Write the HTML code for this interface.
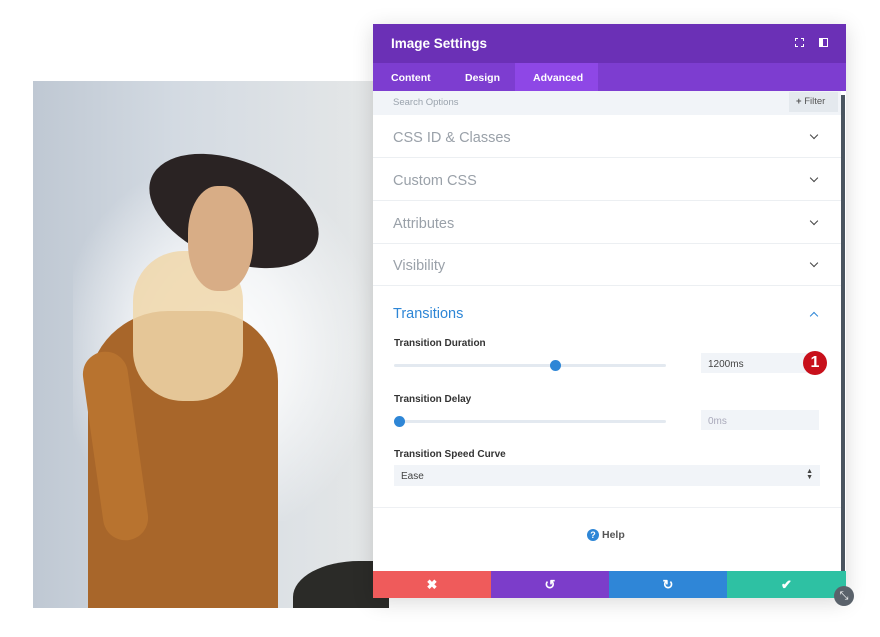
<!DOCTYPE html>
<html><head><style>
*{margin:0;padding:0;box-sizing:border-box}
body{width:880px;height:637px;background:#fff;position:relative;overflow:hidden;font-family:"Liberation Sans",sans-serif}
.abs{position:absolute}
.photo{left:33px;top:81px;width:356px;height:527px;background:linear-gradient(90deg,#bfc8d3 0%,#d3dae2 40%,#e6e8e8 100%);overflow:hidden}
.panel{left:373px;top:24px;width:473px;height:574px;background:#fff;box-shadow:0 4px 20px rgba(0,0,0,.15)}
.hdr{left:0;top:0;width:473px;height:39px;background:#6b30b6;color:#fff;font-size:13.5px;font-weight:bold;padding:12px 0 0 18px}
.tabs{left:0;top:39px;width:473px;height:28px;background:#7d3dd0;color:#fff;font-size:10.5px;font-weight:bold}
.tabs span{position:absolute;top:9px}
.search{left:0;top:67px;width:468px;height:24px;background:#f1f4f8;color:#9aa3ad;font-size:9.5px}
.row{left:0;width:468px;height:43px;border-bottom:1px solid #eceff2;color:#9aa1a9;font-size:14.5px;padding:15px 0 0 20px}
.chev{position:absolute;right:24px;top:17px;width:6px;height:6px;border-right:1.6px solid #444;border-bottom:1.6px solid #444;transform:rotate(45deg)}
.lbl{font-size:10px;color:#333;font-weight:bold}
.track{height:3px;background:#e3e9f0;border-radius:2px}
.dot{width:11px;height:11px;border-radius:50%;background:#2e86d6}
.inp{background:#f1f4f8;font-size:10px;color:#444;padding:6px 0 0 7px}
.btn{top:547px;height:27px;color:#fff;font-size:13px;font-weight:bold;text-align:center;line-height:27px}
</style></head><body>
<div class="abs photo">
  <div class="abs" style="left:40px;top:60px;width:320px;height:380px;background:radial-gradient(ellipse at 45% 55%,#fff 0%,rgba(255,255,255,.7) 30%,rgba(255,255,255,0) 65%)"></div>
  <div class="abs" style="left:55px;top:230px;width:190px;height:320px;background:#a8662a;border-radius:80px 70px 0 0"></div>
  <div class="abs" style="left:60px;top:270px;width:45px;height:190px;background:#b8732f;border-radius:30px;transform:rotate(-8deg)"></div>
  <div class="abs" style="left:100px;top:170px;width:110px;height:150px;background:rgba(240,215,170,.85);border-radius:50px"></div>
  <div class="abs" style="left:112px;top:80px;width:178px;height:100px;background:#2a2323;border-radius:50%;transform:rotate(22deg)"></div>
  <div class="abs" style="left:155px;top:105px;width:65px;height:105px;background:#d8ad86;border-radius:45%"></div>
  <div class="abs" style="left:260px;top:480px;width:110px;height:60px;background:#2b2b28;border-radius:60% 0 0 0"></div>
</div>
<div class="abs panel">
  <div class="abs hdr">Image Settings
    <div class="abs" style="right:42px;top:14px;width:9px;height:9px;border:1.5px dashed #fff"></div>
    <div class="abs" style="right:18px;top:14px;width:9px;height:9px;border:1.5px solid #fff;border-left-width:4px"></div>
  </div>
  <div class="abs tabs">
    <span style="left:18px">Content</span><span style="left:92px">Design</span>
    <div class="abs" style="left:142px;top:0;width:83px;height:28px;background:#8e47e6"></div>
    <span style="left:160px">Advanced</span>
  </div>
  <div class="abs search"><span class="abs" style="left:20px;top:6px">Search Options</span>
    <div class="abs" style="left:416px;top:1px;width:49px;height:20px;background:#e4e9ee;color:#555;font-size:9.5px;padding:4px 0 0 7px"><b>+</b> Filter</div></div>
  <div class="abs" style="left:468px;top:71px;width:4px;height:476px;background:#4a5560"></div>
  <div class="abs row" style="top:91px">CSS ID &amp; Classes<div class="chev"></div></div>
  <div class="abs row" style="top:134px">Custom CSS<div class="chev"></div></div>
  <div class="abs row" style="top:177px">Attributes<div class="chev"></div></div>
  <div class="abs row" style="top:219px">Visibility<div class="chev"></div></div>
  <div class="abs" style="left:20px;top:282px;color:#2e86d6;font-size:14.5px">Transitions</div>
  <div class="abs" style="right:29px;top:289px;width:6px;height:6px;border-left:1.6px solid #2e86d6;border-top:1.6px solid #2e86d6;transform:rotate(45deg)"></div>
  <div class="abs lbl" style="left:21px;top:314px">Transition Duration</div>
  <div class="abs track" style="left:21px;top:340px;width:272px"></div>
  <div class="abs dot" style="left:177px;top:336px"></div>
  <div class="abs inp" style="left:328px;top:329px;width:118px;height:20px">1200ms</div>
  <div class="abs" style="left:430px;top:327px;width:24px;height:24px;border-radius:50%;background:#c8101b;color:#fff;font-weight:bold;font-size:16px;text-align:center;line-height:24px">1</div>
  <div class="abs lbl" style="left:21px;top:370px">Transition Delay</div>
  <div class="abs track" style="left:21px;top:396px;width:272px"></div>
  <div class="abs dot" style="left:21px;top:392px"></div>
  <div class="abs inp" style="left:328px;top:386px;width:118px;height:20px;color:#aab">0ms</div>
  <div class="abs lbl" style="left:21px;top:425px">Transition Speed Curve</div>
  <div class="abs inp" style="left:21px;top:441px;width:426px;height:21px">Ease<span class="abs" style="right:7px;top:4px;font-size:7px;line-height:6px">▲<br>▼</span></div>
  <div class="abs" style="left:0;top:483px;width:468px;height:1px;background:#eef0f3"></div>
  <div class="abs" style="left:214px;top:505px;font-size:10.5px;color:#555;font-weight:bold"><span style="display:inline-block;width:12px;height:12px;border-radius:50%;background:#2e86d6;color:#fff;font-size:9px;text-align:center;line-height:12px;margin-right:3px">?</span>Help</div>
  <div class="abs btn" style="left:0;width:118px;background:#ef5b5b">✖</div>
  <div class="abs btn" style="left:118px;width:118px;background:#7c3dca">↺</div>
  <div class="abs btn" style="left:236px;width:118px;background:#2f86d7">↻</div>
  <div class="abs btn" style="left:354px;width:119px;background:#2ec1a3">✔</div>
</div>
<div class="abs" style="left:834px;top:586px;width:20px;height:20px;border-radius:50%;background:#5a626b;color:#fff;font-size:11px;text-align:center;line-height:20px">⤡</div>
</body></html>
